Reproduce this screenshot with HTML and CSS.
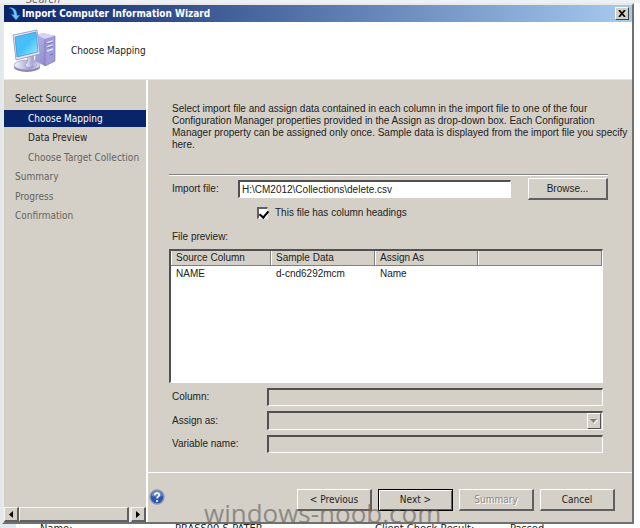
FILE: index.html
```
<!DOCTYPE html>
<html lang="en">

<head>
    <meta charset="utf-8">
    <title>Import Computer Information Wizard</title>
    <link rel="stylesheet" href="styles.css">
</head>

<body>
    <div class="behind-top">Search</div>
    <div class="window">
        <div class="titlebar">
            <svg class="title-icon" width="12" height="14" viewBox="0 0 12 14">
                <path d="M1 1C4 1 6 4 6 8L3 7L8 13L12 8L9 8.500C9 3 6 0 1 1Z" fill="#6cc8fa" stroke="#2b79c9" stroke-width=".4"/>
            </svg>
            <h1>Import Computer Information Wizard</h1>
            <button class="close" type="button" aria-label="Close">
                <svg width="8" height="7" viewBox="0 0 8 7"><path d="M1 0L7 7M7 0L1 7" stroke="#000" stroke-width="1.7"/></svg>
            </button>
        </div>
        <div class="banner">
            <svg class="banner-icon" width="46" height="44" viewBox="0 0 46 44">
                <defs>
                    <linearGradient id="screen" x1="0" y1="0" x2="1" y2="1">
                        <stop offset="0" stop-color="#58b9f4"/>
                        <stop offset=".5" stop-color="#42c0fa"/>
                        <stop offset="1" stop-color="#a5ecff"/>
                    </linearGradient>
                    <linearGradient id="tower" x1="0" y1="0" x2="1" y2="1">
                        <stop offset="0" stop-color="#b9b8ec"/>
                        <stop offset="1" stop-color="#7f7cc0"/>
                    </linearGradient>
                    <linearGradient id="stand" x1="0" y1="0" x2="1" y2="0">
                        <stop offset="0" stop-color="#f5f5ff"/>
                        <stop offset=".6" stop-color="#a5a3d2"/>
                        <stop offset="1" stop-color="#e0e0f5"/>
                    </linearGradient>
                </defs>
                <path d="M25 6L31 4L43 7L43 32L33 37L23 32Z" fill="url(#tower)"/>
                <path d="M33 10L43 7L43 32L33 37Z" fill="#9e9cda" stroke="#7773b3" stroke-width=".6"/>
                <path d="M25 6L31 4L43 7L33 10Z" fill="#d4d4f6"/>
                <path d="M35 14L41 12M35 18L41 16M35 22L41 20" stroke="#e6e5fc" stroke-width="1.500"/>
                <path d="M35 15L41 13M35 19L41 17M38 26L41 25" stroke="#6662a8" stroke-width=".8"/>
                <ellipse cx="15" cy="38" rx="13" ry="5" fill="#8886b0"/>
                <ellipse cx="15" cy="36" rx="13" ry="5" fill="url(#stand)" stroke="#9996bd" stroke-width=".6"/>
                <path d="M15 27L22 26C21 30 22 33 25 36C21 40 14 39 13 36C16 33 16 30 15 27Z" fill="url(#stand)" stroke="#8986ba" stroke-width=".6"/>
                <path d="M1 6L25 1L28 25L4 31Z" fill="#e7e9f8" stroke="#8c92bb" stroke-width=".8"/>
                <path d="M3 8L24 3L26 23L5 28Z" fill="url(#screen)" stroke="#438bc5" stroke-width=".7"/>
            </svg>
            <h2>Choose Mapping</h2>
        </div>
        <div class="content">
            <div class="sidebar">
                <ul class="steps">
                    <li>Select Source</li>
                    <li class="sub current">Choose Mapping</li>
                    <li class="sub">Data Preview</li>
                    <li class="sub pending">Choose Target Collection</li>
                    <li class="pending">Summary</li>
                    <li class="pending">Progress</li>
                    <li class="pending">Confirmation</li>
                </ul>
                <div class="scrollbar">
                    <button type="button" class="scroll-btn" aria-label="Scroll left">
                        <svg width="4" height="7" viewBox="0 0 4 7"><path d="M4 0V7L0 3.500Z"/></svg>
                    </button>
                    <div class="thumb"></div>
                    <button type="button" class="scroll-btn" aria-label="Scroll right">
                        <svg width="4" height="7" viewBox="0 0 4 7"><path d="M0 0V7L4 3.500Z"/></svg>
                    </button>
                </div>
            </div>
            <form class="main">
                <div class="page">
                    <p class="intro">Select import file and assign data contained in each column in the import file to one of the four Configuration Manager properties provided in the Assign as drop-down box. Each Configuration Manager property can be assigned only once. Sample data is displayed from the import file you specify here.</p>
                    <hr>
                    <div class="file-row">
                        <label for="file">Import file:</label>
                        <input class="field file" id="file" type="text" value="H:\CM2012\Collections\delete.csv">
                        <button class="btn browse" type="button">Browse...</button>
                    </div>
                    <div class="check-row">
                        <input id="headings" type="checkbox" checked>
                        <label for="headings">This file has column headings</label>
                    </div>
                    <div class="preview-label" id="preview">File preview:</div>
                    <div class="list">
                        <table aria-labelledby="preview">
                            <colgroup>
                                <col class="col-source">
                                <col class="col-sample">
                                <col class="col-assign">
                                <col>
                            </colgroup>
                            <thead>
                                <tr>
                                    <th>Source Column</th>
                                    <th>Sample Data</th>
                                    <th>Assign As</th>
                                    <th></th>
                                </tr>
                            </thead>
                            <tbody>
                                <tr>
                                    <td>NAME</td>
                                    <td>d-cnd6292mcm</td>
                                    <td>Name</td>
                                    <td></td>
                                </tr>
                            </tbody>
                        </table>
                    </div>
                    <div class="prop-row">
                        <label for="column">Column:</label>
                        <input class="field" id="column" type="text" disabled>
                    </div>
                    <div class="prop-row">
                        <label for="assign">Assign as:</label>
                        <div class="combo">
                            <select class="field" id="assign" disabled></select>
                            <span class="combo-arrow">
                                <svg width="8" height="5" viewBox="0 0 8 5"><path d="M1 1H8L4.500 5Z" fill="#fff"/><path d="M0 0H7L3.500 4Z" fill="#808080"/></svg>
                            </span>
                        </div>
                    </div>
                    <div class="prop-row">
                        <label for="variable">Variable name:</label>
                        <input class="field" id="variable" type="text" disabled>
                    </div>
                </div>
                <div class="footer">
                    <button class="help" type="button" aria-label="Help">
                        <svg width="16" height="16" viewBox="0 0 16 16">
                            <circle cx="8" cy="8" r="7" fill="#2d56ae" stroke="#8d98b2" stroke-width="1.4"/>
                            <path d="M2.500 7A5.500 5.500 0 0 1 13.500 7C10 8 6 8 2.500 7Z" fill="#6288d0"/>
                            <path d="M5.700 6.300C5.700 3.300 10.400 3.400 10.300 6C10.200 7.700 8 7.700 8 9.600" fill="none" stroke="#fff" stroke-width="1.7"/>
                            <circle cx="8" cy="12" r="1.100" fill="#fff"/>
                        </svg>
                    </button>
                    <div class="actions">
                        <button class="btn" type="button">&lt; Previous</button>
                        <button class="btn default" type="button">Next &gt;</button>
                        <button class="btn" type="button" disabled>Summary</button>
                        <button class="btn" type="button">Cancel</button>
                    </div>
                </div>
            </form>
        </div>
    </div>
    <div class="behind-bottom">
        <span>Name:</span>
        <span>PRASS00 S-PATER</span>
        <span>Client Check Result:</span>
        <span>Passed</span>
    </div>
    <div class="watermark">windows-noob.com</div>
</body>

</html>
```

FILE: styles.css
```
* {
    box-sizing: border-box;
}

body {
    margin: 0;
    height: 100vh;
    overflow: hidden;
    display: flex;
    flex-direction: column;
    position: relative;
    background: linear-gradient(to right, #e2e8f0 0, #e2e8f0 16px, #fff 16px);
    font-family: "DejaVu Sans Condensed", "Noto Sans", sans-serif;
    font-size: 10px;
    line-height: 14px;
    color: #222;
}

h1,
h2,
p,
ul {
    margin: 0;
    padding: 0;
}

button,
input,
select {
    font: inherit;
    color: inherit;
    margin: 0;
}

.behind-top {
    height: 3px;
    overflow: hidden;
    padding-left: 26px;
    font-size: 11px;
    line-height: 0;
    font-style: italic;
    color: #666;
    background: #edf0f4;
}

.behind-bottom {
    height: 4px;
    overflow: hidden;
    display: grid;
    grid-template-columns: 135px 200px 135px 1fr;
    padding-left: 40px;
    font-size: 11px;
    line-height: 9px;
}

.window {
    flex: 1;
    min-height: 0;
    display: flex;
    flex-direction: column;
    margin: 0 6px 0 2px;
    border: 2px solid #e9e9e5;
    border-right-color: #707070;
    border-bottom-color: #707070;
    background: #d4d0c8;
}

.titlebar {
    flex: none;
    height: 17px;
    display: flex;
    align-items: center;
    gap: 2px;
    padding: 0 3px 0 4px;
    color: #fff;
    background: linear-gradient(to right, #0a246a, #a6caf0);
}

.titlebar h1 {
    flex: 1;
    font-size: 10px;
    font-weight: bold;
}

.close {
    width: 14px;
    height: 13px;
    padding: 0;
    display: flex;
    align-items: center;
    justify-content: center;
    background: #d4d0c8;
    border: 1px solid #fff;
    border-right-color: #404040;
    border-bottom-color: #404040;
}

.banner {
    flex: none;
    height: 58px;
    display: flex;
    align-items: center;
    gap: 13px;
    padding-left: 8px;
    background: #fff;
    border-bottom: 1px solid #e8e6e0;
}

.banner h2 {
    font-size: 10px;
    font-weight: normal;
}

.content {
    flex: 1;
    min-height: 0;
    display: flex;
}

.sidebar {
    flex: none;
    width: 144px;
    display: flex;
    flex-direction: column;
    justify-content: space-between;
    border-right: 2px solid #fff;
}

.steps {
    height: 134px;
    margin-top: 10px;
    display: flex;
    flex-direction: column;
    justify-content: space-between;
    list-style: none;
}

.steps li {
    padding-left: 11px;
    line-height: 17px;
    white-space: nowrap;
}

.steps .sub {
    padding-left: 24px;
}

.steps .current {
    color: #fff;
    background: #0a246a;
}

.steps .pending {
    color: #66645f;
}

.scrollbar {
    display: flex;
    height: 15px;
    background: #e9e7e3;
}

.scroll-btn,
.thumb {
    padding: 0;
    background: #d4d0c8;
    border: 1px solid #f5f4f0;
    border-right: 2px solid #606060;
    border-bottom: 2px solid #606060;
}

.scroll-btn {
    width: 15px;
    display: flex;
    align-items: center;
    justify-content: center;
}

.thumb {
    flex: 1;
    margin-right: 2px;
}

.main {
    flex: 1;
    min-width: 0;
    display: flex;
    flex-direction: column;
    justify-content: space-between;
}

.page {
    padding: 23px 24px 0 21px;
    font-family: "Liberation Sans", Arial, sans-serif;
    line-height: 12px;
}

.intro {
    margin-right: -20px;
    padding-left: 3px;
}

hr {
    height: 2px;
    margin: 23px 0 0;
    border: 0;
    border-top: 1px solid #808080;
    border-bottom: 1px solid #fff;
}

.file-row {
    display: flex;
    align-items: center;
    margin-top: 2px;
}

.file-row label {
    width: 69px;
    padding-left: 3px;
}

.field {
    height: 18px;
    padding: 0 3px;
    background: #d4d0c8;
    border: 2px solid #505050;
    border-right: 1px solid #fff;
    border-bottom: 1px solid #fff;
    border-radius: 0;
    appearance: none;
}

.file {
    flex: 1;
    min-width: 0;
    padding: 0 2px;
    background: #fff;
}

.btn {
    width: 75px;
    height: 22px;
    padding: 0;
    background: #d4d0c8;
    border: 1px solid #fff;
    border-right: 2px solid #606060;
    border-bottom: 2px solid #606060;
}

.browse {
    width: 80px;
    margin-left: 17px;
}

.check-row {
    display: flex;
    align-items: center;
    gap: 7px;
    margin: 7px 0 0 88px;
}

.check-row input {
    appearance: none;
    width: 11px;
    height: 12px;
    background: #fff;
    border: 2px solid #606060;
    border-right: 1px solid #eee;
    border-bottom: 1px solid #eee;
}

.check-row input:checked::before {
    content: "";
    display: block;
    width: 4px;
    height: 7px;
    margin: 0 0 0 2px;
    border: solid #000;
    border-width: 0 2px 2px 0;
    transform: rotate(40deg);
}

.preview-label {
    margin-top: 12px;
    padding-left: 3px;
}

.list {
    height: 134px;
    margin: 6px 5px 5px 0;
    background: #fff;
    border: 2px solid #505050;
    border-right: 1px solid #fff;
    border-bottom: 1px solid #fff;
}

.list table {
    width: 100%;
    table-layout: fixed;
    border-collapse: separate;
    border-spacing: 0;
}

.col-source {
    width: 100px;
}

.col-sample {
    width: 104px;
}

.col-assign {
    width: 103px;
}

.list th,
.list td {
    height: 15px;
    padding: 0 5px;
    font-weight: normal;
    text-align: left;
}

.list th {
    background: #d4d0c8;
    border-right: 1px solid #808080;
    border-bottom: 1px solid #808080;
    box-shadow: inset 1px 0 #fff;
}

.prop-row {
    display: flex;
    align-items: center;
    margin: 0 5px 5px 0;
}

.prop-row label {
    width: 98px;
    padding-left: 3px;
}

.prop-row .field {
    flex: 1;
    min-width: 0;
}

.combo {
    flex: 1;
    display: flex;
    position: relative;
}

.combo .field {
    height: 19px;
    opacity: 1;
}

.combo-arrow {
    position: absolute;
    top: 2px;
    right: 2px;
    bottom: 1px;
    width: 14px;
    display: flex;
    align-items: center;
    justify-content: center;
    border: 1px solid #fff;
    border-right-color: #505050;
    border-bottom-color: #505050;
    pointer-events: none;
}

.footer {
    height: 50px;
    display: flex;
    align-items: flex-start;
    justify-content: space-between;
    padding: 16px 17px 0 1px;
    border-top: 1px solid #fff;
}

.help {
    padding: 0;
    background: none;
    border: 0;
}

.actions {
    display: flex;
    gap: 6px;
}

.actions .default {
    border: 1px solid #000;
    box-shadow: inset 1px 1px #fff, inset -1px -1px #606060;
}

.btn:disabled {
    color: #8c8982;
    text-shadow: 1px 1px #fff;
}

.watermark {
    position: absolute;
    left: 204px;
    bottom: 0;
    font-family: "Open Sans", "Noto Sans", sans-serif;
    font-size: 26px;
    line-height: 30px;
    color: #69665f;
    opacity: .65;
    pointer-events: none;
}
```
